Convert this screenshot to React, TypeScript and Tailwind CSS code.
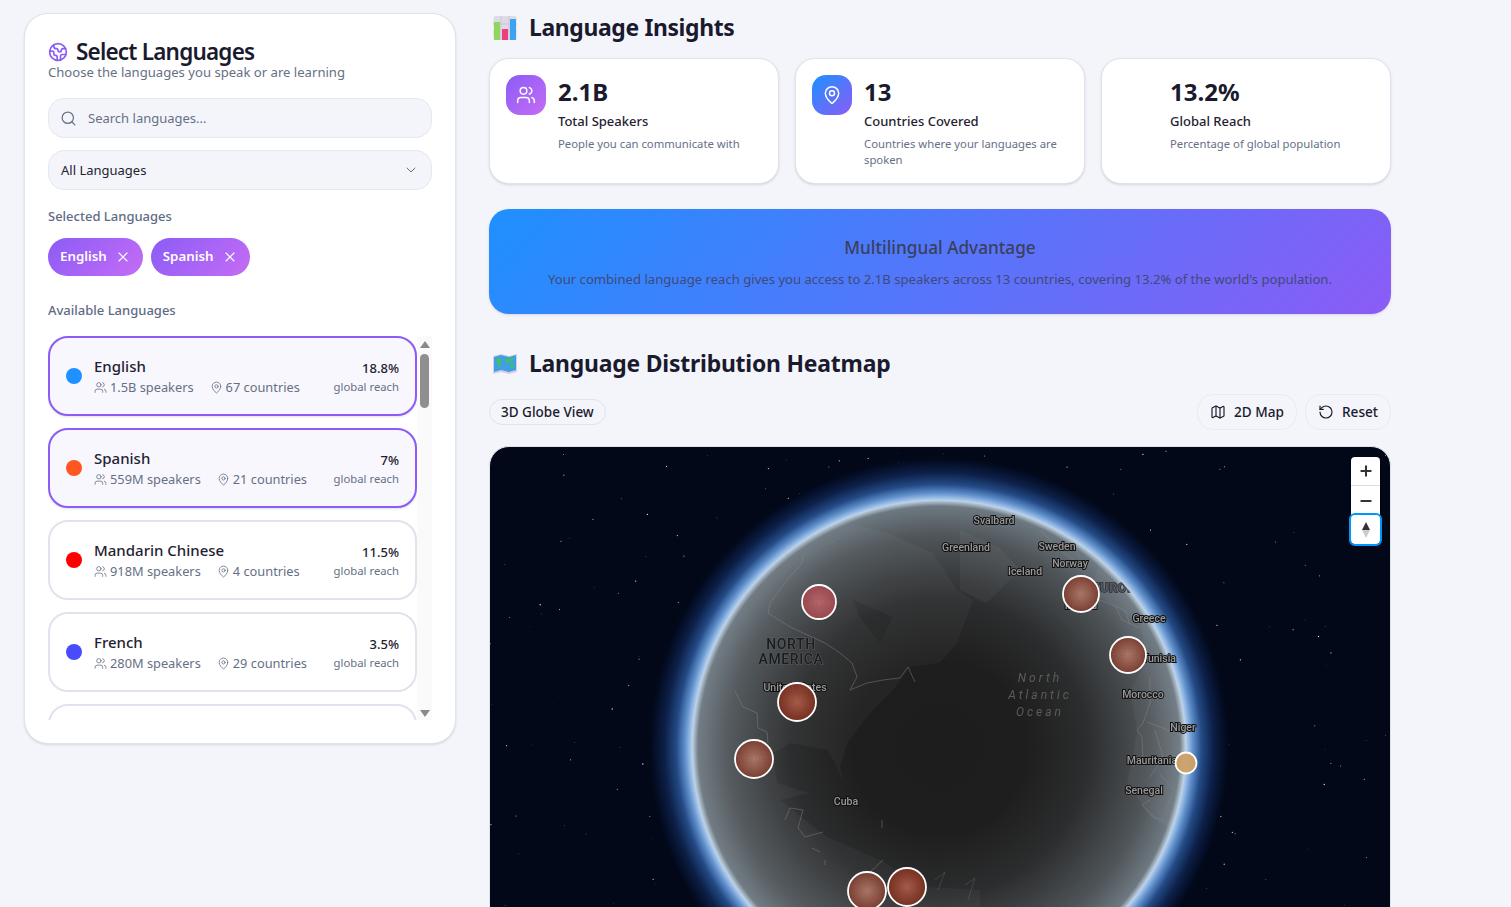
import { Earth, Search, ChevronDown, X, Users, MapPin, Map as MapIcon, RotateCcw, Plus, Minus } from 'lucide-react'

const languages = [
  { name: 'English', dot: 'bg-[#1e90ff]', speakers: '1.5B', countries: 67, reach: '18.8%', selected: true },
  { name: 'Spanish', dot: 'bg-[#ff5722]', speakers: '559M', countries: 21, reach: '7%', selected: true },
  { name: 'Mandarin Chinese', dot: 'bg-[#ff0000]', speakers: '918M', countries: 4, reach: '11.5%', selected: false },
  { name: 'French', dot: 'bg-[#4a4aff]', speakers: '280M', countries: 29, reach: '3.5%', selected: false },
]

const insights = [
  { value: '2.1B', label: 'Total Speakers', desc: 'People you can communicate with', icon: 'users' },
  { value: '13', label: 'Countries Covered', desc: 'Countries where your languages are spoken', icon: 'pin' },
  { value: '13.2%', label: 'Global Reach', desc: 'Percentage of global population', icon: 'none' },
]

// seeded so the star field stays the same between runs
const stars = Array.from({ length: 190 }, (_, i) => {
  const a = Math.sin(i * 12.9898) * 43758.5453
  const b = Math.sin(i * 78.233) * 24634.6345
  const c = Math.sin(i * 39.425) * 9631.17
  return {
    x: 490 + (a - Math.floor(a)) * 900,
    y: 447 + (b - Math.floor(b)) * 460,
    r: 0.3 + (c - Math.floor(c)) * 0.4,
    o: 0.3 + (c - Math.floor(c)) * 0.6,
  }
})

const mapLabels = [
  { t: 'Svalbard', x: 994, y: 524 },
  { t: 'Greenland', x: 966, y: 551 },
  { t: 'Sweden', x: 1057, y: 550 },
  { t: 'Norway', x: 1070, y: 567 },
  { t: 'Iceland', x: 1025, y: 575 },
  { t: 'Ireland', x: 1081, y: 609 },
  { t: 'Greece', x: 1149, y: 622 },
  { t: 'Tunisia', x: 1159, y: 662 },
  { t: 'Morocco', x: 1143, y: 698 },
  { t: 'Niger', x: 1183, y: 731 },
  { t: 'Mauritania', x: 1152, y: 764 },
  { t: 'Senegal', x: 1144, y: 794 },
  { t: 'United States', x: 795, y: 691 },
  { t: 'Cuba', x: 846, y: 805 },
  { t: 'Canada', x: 819, y: 606 },
  { t: 'Mexico', x: 754, y: 762 },
  { t: 'Spain', x: 1124, y: 655 },
]

const pins = [
  { x: 819, y: 602, r: 17, fill: 'url(#pinRose)' },
  { x: 797, y: 702, r: 19, fill: 'url(#pinDeep)' },
  { x: 754, y: 759, r: 19, fill: 'url(#pinSoft)' },
  { x: 1081, y: 594, r: 18, fill: 'url(#pinSoft)' },
  { x: 1128, y: 655, r: 18, fill: 'url(#pinSoft)' },
  { x: 1186, y: 763, r: 10.5, fill: '#cfa268' },
  { x: 867, y: 891, r: 19, fill: 'url(#pinSoft)' },
  { x: 907, y: 887, r: 19, fill: 'url(#pinDeep)' },
]

function BarChartEmoji() {
  return (
    <svg width="24" height="24" viewBox="0 0 24 24" className="shrink-0">
      <rect x="0.5" y="0" width="23" height="24" rx="2" fill="#dcdbe6" />
      <path d="M8 0v24M16 0v24M0 8h24M0 16h24" stroke="#c3c2cf" strokeWidth="0.7" />
      <rect x="1" y="6" width="6" height="18" fill="#8ed65f" />
      <rect x="9" y="13" width="6" height="11" fill="#ee3f7c" />
      <rect x="17" y="3" width="6" height="21" fill="#3ea2f0" />
    </svg>
  )
}

function MapEmoji() {
  return (
    <svg width="24" height="24" viewBox="0 0 24 24" className="shrink-0">
      <path d="M0 4l8-2 8 2 8-2v18l-8 2-8-2-8 2z" fill="#d8cde6" />
      <path d="M1 5l7-2 8 2 7-2v15l-7 2-8-2-7 2z" fill="#3f9fe0" />
      <path d="M3 7l4-1 2 2-2 3 1 3-2 1-2-4zM12 6l3 1 4-2 2 2-3 3-2-1-1 3-2-1zM17 13l3-1 1 3-3 2z" fill="#3fbf6c" />
    </svg>
  )
}

function LanguageCard({ lang }: { lang: (typeof languages)[number] }) {
  return (
    <div
      className={`flex h-20 shrink-0 items-center rounded-[20px] border-2 px-4 ${
        lang.selected ? 'border-[#8b5cf6] bg-[#f8f7fe] shadow-sm' : 'border-[#dfe3ec] bg-white'
      }`}
    >
      <span className={`mr-3 h-4 w-4 shrink-0 rounded-full ${lang.dot}`} />
      <div className="min-w-0 flex-1">
        <div className="text-[15px] leading-[22px] font-medium text-[#1f2230]">{lang.name}</div>
        <div className="flex items-center gap-4 text-[12.8px] leading-[21px] text-[#667085]">
          <span className="flex items-center gap-[3px]">
            <Users size={13} strokeWidth={1.5} />
            {lang.speakers} speakers
          </span>
          <span className="flex items-center gap-[3px]">
            <MapPin size={13} strokeWidth={1.5} />
            {lang.countries} countries
          </span>
        </div>
      </div>
      <div className="pt-[2px] text-right">
        <div className="text-[13px] leading-5 font-medium text-[#1f2230]">{lang.reach}</div>
        <div className="text-[11.3px] leading-[18px] text-[#667085]">global reach</div>
      </div>
    </div>
  )
}

function LanguagePanel() {
  return (
    <aside className="h-[731px] w-[432px] shrink-0 rounded-3xl border border-[#dfe3ec] bg-white px-[23px] pt-[23px] shadow-sm">
      <div className="flex items-center gap-2 pt-[1px]">
        <Earth size={20} strokeWidth={2} className="text-[#8b5cf6]" />
        <h2 className="text-[22.5px] leading-[28px] font-semibold tracking-[-0.8px] text-[#1a1a2e]">Select Languages</h2>
      </div>
      <p className="text-[13.1px] leading-[12px] text-[#667085]">Choose the languages you speak or are learning</p>

      <div className="mt-[20px] flex h-10 items-center gap-[11px] rounded-2xl border border-[#e6e8f0] bg-[#f4f5fa] pl-[11px] text-[13px] text-[#667085]">
        <Search size={17} strokeWidth={1.75} />
        <span className="pt-[2px]">Search languages...</span>
      </div>
      <div className="mt-3 flex h-10 items-center justify-between rounded-2xl border border-[#e6e8f0] bg-[#f4f5fa] px-3 text-[13px] text-[#1f2230]">
        <span className="pt-[1px]">All Languages</span>
        <ChevronDown size={16} strokeWidth={1.5} className="text-[#667085]" />
      </div>

      <div className="mt-4 text-[13px] leading-5 font-medium text-[#5f6b85]">Selected Languages</div>
      <div className="mt-3 flex gap-2">
        {languages
          .filter((l) => l.selected)
          .map((l) => (
            <span
              key={l.name}
              className="flex h-[38px] items-center gap-2 rounded-full bg-[linear-gradient(135deg,#8b5cf6,#c56cf5)] px-3 text-[13.3px] font-semibold text-white"
            >
              {l.name}
              <X size={16} strokeWidth={1.75} />
            </span>
          ))}
      </div>

      <div className="mt-6 text-[13px] leading-5 font-medium text-[#5f6b85]">Available Languages</div>
      <div className="relative mt-4 h-96 overflow-hidden pr-[15px]">
        <div className="flex flex-col gap-3">
          {languages.map((l) => (
            <LanguageCard key={l.name} lang={l} />
          ))}
          {/* next row, only its top edge shows above the fold */}
          <div className="h-20 shrink-0 rounded-[20px] border-2 border-[#dfe3ec] bg-white" />
        </div>
        {/* scrollbar */}
        <div className="absolute top-0 right-0 bottom-0 w-[15px] bg-[#fafafa]">
          <div className="absolute top-[5px] left-[3px] h-0 w-0 border-x-[5px] border-b-[7px] border-x-transparent border-b-[#8a8a8a]" />
          <div className="absolute top-[18px] left-[3px] h-[54px] w-[9px] rounded-full bg-[#8f8f8f]" />
          <div className="absolute bottom-[3px] left-[3px] h-0 w-0 border-x-[5px] border-t-[7px] border-x-transparent border-t-[#8a8a8a]" />
        </div>
      </div>
    </aside>
  )
}

function InsightCard({ item }: { item: (typeof insights)[number] }) {
  return (
    <div className="flex h-[126px] flex-1 gap-3 rounded-[20px] border border-[#dfe3ec] bg-white p-[15px] pt-4 pl-4 shadow-sm">
      {item.icon === 'users' && (
        <div className="flex h-10 w-10 shrink-0 items-center justify-center rounded-[14px] bg-[linear-gradient(135deg,#8b5cf6,#c56cf5)] text-white">
          <Users size={20} strokeWidth={1.75} />
        </div>
      )}
      {item.icon === 'pin' && (
        <div className="flex h-10 w-10 shrink-0 items-center justify-center rounded-[14px] bg-[linear-gradient(135deg,#1e90ff,#8b5cf6)] text-white">
          <MapPin size={20} strokeWidth={1.75} />
        </div>
      )}
      {item.icon === 'none' && <div className="h-10 w-10 shrink-0" />}
      <div className="min-w-0">
        <div className="text-2xl leading-[34px] font-bold text-[#1a1a2e]">{item.value}</div>
        <div className="mt-[2px] text-[13px] leading-5 font-medium text-[#1f2230]">{item.label}</div>
        <div className="mt-[5px] text-[11.3px] leading-4 text-[#667085]">{item.desc}</div>
      </div>
    </div>
  )
}

function GlobeMap() {
  return (
    <svg viewBox="490 447 900 498" className="absolute inset-0 h-full w-full">
      <defs>
        <radialGradient id="atmo" gradientUnits="userSpaceOnUse" cx="939" cy="747" r="292">
          <stop offset="0.83" stopColor="#e6f0fa" />
          <stop offset="0.85" stopColor="#a6c6ea" />
          <stop offset="0.87" stopColor="#5f8fcb" />
          <stop offset="0.9" stopColor="#234a85" />
          <stop offset="0.94" stopColor="#0d2048" />
          <stop offset="0.98" stopColor="#030c22" />
          <stop offset="1" stopColor="#020818" stopOpacity="0" />
        </radialGradient>
        <radialGradient id="earth" gradientUnits="userSpaceOnUse" cx="939" cy="747" r="247">
          <stop offset="0" stopColor="#1d1d1d" />
          <stop offset="0.35" stopColor="#1e1e1e" />
          <stop offset="0.6" stopColor="#2c2d2e" />
          <stop offset="0.85" stopColor="#4e5458" />
          <stop offset="0.975" stopColor="#6d7880" />
          <stop offset="1" stopColor="#c2d6e8" />
        </radialGradient>
        <radialGradient id="pinRose">
          <stop offset="0" stopColor="#bb6668" />
          <stop offset="0.6" stopColor="#a5545a" />
          <stop offset="1" stopColor="#a0494e" />
        </radialGradient>
        <radialGradient id="pinDeep">
          <stop offset="0" stopColor="#ab5f4a" />
          <stop offset="0.6" stopColor="#8c4030" />
          <stop offset="1" stopColor="#7a3020" />
        </radialGradient>
        <radialGradient id="pinSoft">
          <stop offset="0" stopColor="#ae7868" />
          <stop offset="0.6" stopColor="#8f5546" />
          <stop offset="1" stopColor="#7c3d30" />
        </radialGradient>
        <clipPath id="globeClip">
          <circle cx="939" cy="747" r="246" />
        </clipPath>
      </defs>

      {stars.map((s, i) => (
        <circle key={i} cx={s.x} cy={s.y} r={s.r} fill="#fff" opacity={s.o} />
      ))}
      <circle cx="939" cy="747" r="292" fill="url(#atmo)" />
      <circle cx="939" cy="747" r="247" fill="url(#earth)" />

      <g clipPath="url(#globeClip)">
        {/* land */}
        <path
          d="M847 523L887 533 933 553 957 590 973 600 957 643 940 663 910 667 893 690 870 713 847 743 840 767 843 782 835 763 827 750 790 743 773 753 777 783 810 793 780 800 827 837 880 860 927 887 980 890 980 907 600 907 600 640 780 523Z"
          fill="#fff"
          opacity="0.035"
        />
        <path d="M853 600L893 617 880 643 870 630 860 618Z" fill="#000" opacity="0.1" />
        <path
          d="M960 530L1000 548 1020 570 990 600 985 603 960 590ZM1034 530L1060 520 1100 560 1090 590 1120 610 1140 625 1148 660 1130 690 1137 730 1133 757 1127 783 1150 817 1173 830 1240 850 1240 560 1120 500Z"
          fill="#fff"
          opacity="0.04"
        />
        {/* borders */}
        <g fill="none" stroke="#8a8a8a" strokeWidth="0.7" opacity="0.65">
          <path d="M768 613L790 627 825 643 840 653 852 663 857 677 850 690 867 683 883 680 900 678 908 667 915 682" />
          <path d="M735 691L743 707 757 713 758 728 767 732 768 743" />
          <path d="M768 613L770 603 787 580 802 563 803 555" />
          <path d="M803 555L840 538" strokeDasharray="1.5 2" />
          <path d="M785 820L790 808 803 810 798 828 805 837 823 832" />
          <path d="M812 848L820 852M825 860V865M882 820V828M883 860L870 872" />
          <path d="M1150 677V703L1143 723 1137 730 1142 737 1143 757 1133 767" />
          <path d="M1147 722L1173 732M1155 730L1163 757 1150 777" />
          <path d="M1040 530L1060 550 1080 565M1100 600L1125 610 1130 625M1115 605L1122 620 1140 628" />
          <path d="M1150 800L1142 805 1155 818 1165 820M1160 775L1175 790 1165 810" />
          <path d="M935 880L945 872 938 890M965 885L975 878 968 900" opacity="0.6" />
        </g>
        {/* labels that sit under the pins */}
        <text x="1118" y="592" textAnchor="middle" fontFamily="Roboto, sans-serif" fontSize="13" fontWeight="700" fill="#555a62" stroke="#2a2e33" strokeWidth="1.5" paintOrder="stroke" letterSpacing="0.5">
          EUROPE
        </text>
        <text textAnchor="middle" fontFamily="Roboto, sans-serif" fontSize="14" fontWeight="500" fill="#1c1c1c" stroke="#5a5f63" strokeWidth="1.2" paintOrder="stroke" letterSpacing="0.6">
          <tspan x="791" y="649">NORTH</tspan>
          <tspan x="791" y="664">AMERICA</tspan>
        </text>
        <text textAnchor="middle" fontFamily="Roboto, sans-serif" fontSize="12" fontStyle="italic" fill="#5c5c5c" letterSpacing="3">
          <tspan x="1040" y="682">North</tspan>
          <tspan x="1040" y="699">Atlantic</tspan>
          <tspan x="1040" y="716">Ocean</tspan>
        </text>
      </g>
      {mapLabels.map((l) => (
        <text
          key={l.t}
          x={l.x}
          y={l.y}
          textAnchor="middle"
          fontFamily="Roboto, sans-serif"
          fontSize="10.5"
          fontWeight="500"
          fill="#9a9a9a"
          stroke="#111"
          strokeWidth="2"
          paintOrder="stroke"
        >
          {l.t}
        </text>
      ))}
      {pins.map((p) => (
        <circle key={`${p.x}-${p.y}`} cx={p.x} cy={p.y} r={p.r} fill={p.fill} fillOpacity="0.95" stroke="#fff" strokeWidth="1.8" />
      ))}
    </svg>
  )
}

export default function App() {
  const font = { fontFamily: '"Noto Sans", "Open Sans", sans-serif' }
  return (
    <div style={font} className="flex h-screen gap-[33px] overflow-hidden bg-[#f4f5fa] pt-[13px] pl-6">
      <LanguagePanel />

      <main className="w-[902px] shrink-0 pt-[1px]">
        <div className="flex h-7 items-center gap-3 pl-1">
          <BarChartEmoji />
          <h2 className="text-[22.9px] font-bold tracking-[-0.35px] text-[#1a1a2e]">Language Insights</h2>
        </div>

        <div className="mt-4 flex gap-4">
          {insights.map((item) => (
            <InsightCard key={item.label} item={item} />
          ))}
        </div>

        <div className="mt-[25px] flex h-[105px] flex-col items-center justify-center rounded-[20px] bg-[linear-gradient(135deg,#1e90ff,#8b5cf6)] shadow-sm">
          <div className="text-[17.2px] leading-7 font-medium text-[#3a3f5c]">Multilingual Advantage</div>
          <div className="mt-[7px] text-[13.1px] leading-5 text-[#3f4a7a]">
            Your combined language reach gives you access to 2.1B speakers across 13 countries, covering 13.2% of the
            world's population.
          </div>
        </div>

        <div className="mt-[36px] flex h-7 items-center gap-3 pl-1">
          <MapEmoji />
          <h2 className="text-[22.9px] font-bold tracking-[-0.2px] text-[#1a1a2e]">Language Distribution Heatmap</h2>
        </div>

        <div className="mt-4 flex h-9 items-center justify-between">
          <span className="flex h-[26px] items-center rounded-full border border-[#dfe3ec] px-[11px] text-[13.5px] font-medium text-[#1a1a2e]">
            3D Globe View
          </span>
          <div className="flex gap-2">
            <button className="flex h-9 items-center gap-2 rounded-2xl border border-[#e9ebf2] bg-[#f4f5fa] px-3 text-[13.6px] font-medium text-[#1a1a2e]">
              <MapIcon size={16} strokeWidth={1.75} />
              2D Map
            </button>
            <button className="flex h-9 items-center gap-2 rounded-2xl border border-[#e9ebf2] bg-[#f4f5fa] px-3 text-[13.6px] font-medium text-[#1a1a2e]">
              <RotateCcw size={16} strokeWidth={1.75} />
              Reset
            </button>
          </div>
        </div>

        <div className="relative mt-4 h-[500px] overflow-hidden rounded-[20px] border border-[#dfe3ec] bg-[#020818]">
          <GlobeMap />
          <div className="absolute top-[10px] right-[10px] flex w-[29px] flex-col rounded bg-white shadow">
            <div className="flex h-[29px] items-center justify-center border-b border-[#ddd] text-[#333]">
              <Plus size={16} strokeWidth={3} />
            </div>
            <div className="flex h-[29px] items-center justify-center text-[#333]">
              <Minus size={16} strokeWidth={3} />
            </div>
            <div className="flex h-[29px] flex-col items-center justify-center rounded outline-2 outline-[#0096ff]">
              <div className="h-0 w-0 border-x-[4px] border-b-[8px] border-x-transparent border-b-[#333]" />
              <div className="h-0 w-0 border-x-[4px] border-t-[8px] border-x-transparent border-t-[#ccc]" />
            </div>
          </div>
        </div>
      </main>
    </div>
  )
}
